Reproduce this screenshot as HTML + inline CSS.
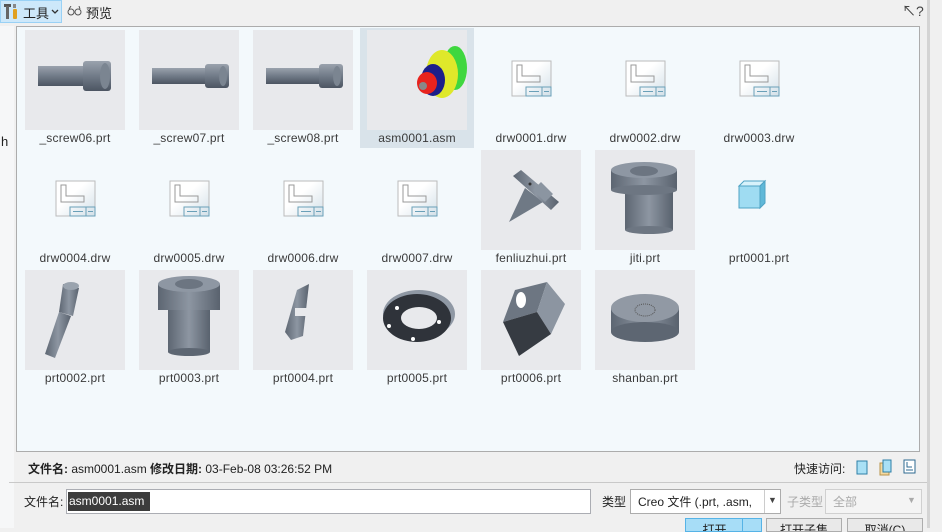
<!DOCTYPE html>
<html><head><meta charset="utf-8">
<style>
*{margin:0;padding:0;box-sizing:border-box}
body{width:942px;height:528px;overflow:hidden;background:#f0f0f0;font-family:"Liberation Sans","Noto Sans CJK SC",sans-serif;font-size:12px;color:#333;position:relative}
.abs{position:absolute}
.panel{left:16px;top:26px;width:904px;height:426px;background:#f3f9fc;border:1px solid #acacac}
.cell{position:absolute;width:114px;height:120px}
.thumb{position:absolute;left:0;top:0;width:100px;height:100px;background:#e8e9ec}
.cell svg{position:absolute;left:0;top:0}
.lbl{position:absolute;left:-7px;width:114px;top:101px;text-align:center;font-size:12px;color:#3a3a3a;letter-spacing:0.2px}
.sel{background:#d9e3ea}
.btn{position:absolute;top:518px;height:14px;border:1px solid #adadad;background:#e9e9e9;overflow:hidden;font-size:12px;color:#222;text-align:center;line-height:14px;padding-top:4px}
</style></head><body>
<div class="abs" style="left:0;top:0;width:942px;height:26px;background:#f0f0f0"></div>
<div class="abs" style="left:0;top:0;width:62px;height:23px;background:#cde8fa;border:1px solid #99d1f5"></div>
<svg class="abs" style="left:3px;top:3px" width="16" height="17" viewBox="0 0 16 17">
<rect x="1" y="1" width="7" height="3" fill="#555"/><rect x="3" y="3" width="3" height="13" fill="#666"/>
<rect x="10" y="1" width="3" height="4" fill="#888"/><rect x="10" y="6" width="4" height="10" rx="1" fill="#e0a020"/></svg>
<div class="abs" style="left:23px;top:3px;font-size:13px;color:#222">工具</div>
<svg class="abs" style="left:51px;top:9px" width="8" height="6"><path d="M1 1L4 4L7 1" stroke="#333" fill="none" stroke-width="1.3"/></svg>
<svg class="abs" style="left:67px;top:6px" width="16" height="11"><circle cx="4" cy="6" r="3" fill="none" stroke="#555"/><circle cx="11" cy="6" r="3" fill="none" stroke="#555"/><path d="M2 3L4 0M13 3L12 0" stroke="#555"/></svg>
<div class="abs" style="left:86px;top:3px;font-size:13px;color:#222">预览</div>
<div class="abs" style="left:902px;top:1px;font-size:14px;color:#444">&#8598;?</div>
<div class="abs" style="left:0;top:26px;width:14px;height:502px;background:#f6f7f8"></div>
<div class="abs" style="left:1px;top:134px;font-size:13px;color:#222">h</div>
<div class="abs" style="left:927px;top:0;width:3px;height:528px;background:#d4d4d4"></div>
<div class="abs" style="left:930px;top:0;width:12px;height:528px;background:#f0f0f0"></div>

<div class="abs panel"></div>
<div class="abs sel" style="left:360px;top:28px;width:114px;height:120px"></div>

<div class="cell" style="left:25px;top:30px"><div class="thumb"></div>
<svg width="100" height="100"><defs><linearGradient id="g1" x1="0" y1="0" x2="0" y2="1"><stop offset="0" stop-color="#9aa2ad"/><stop offset=".5" stop-color="#717b88"/><stop offset="1" stop-color="#4c5562"/></linearGradient></defs>
<rect x="13" y="36" width="48" height="20" fill="url(#g1)"/><rect x="58" y="31" width="28" height="30" rx="3" fill="url(#g1)"/><ellipse cx="80" cy="46" rx="5" ry="13" fill="#7b8591"/></svg>
<div class="lbl">_screw06.prt</div></div>
<div class="cell" style="left:139px;top:30px"><div class="thumb"></div>
<svg width="100" height="100"><rect x="13" y="38" width="66" height="16" fill="url(#g1)"/><rect x="66" y="34" width="24" height="24" rx="3" fill="url(#g1)"/><ellipse cx="84" cy="46" rx="4" ry="10" fill="#7b8591"/></svg>
<div class="lbl">_screw07.prt</div></div>
<div class="cell" style="left:253px;top:30px"><div class="thumb"></div>
<svg width="100" height="100"><rect x="13" y="38" width="66" height="16" fill="url(#g1)"/><rect x="66" y="34" width="24" height="24" rx="3" fill="url(#g1)"/><ellipse cx="84" cy="46" rx="4" ry="10" fill="#7b8591"/></svg>
<div class="lbl">_screw08.prt</div></div>
<div class="cell" style="left:367px;top:30px"><div class="thumb"></div>
<svg width="100" height="100"><ellipse cx="88" cy="38" rx="12" ry="22" fill="#3fd73f"/><ellipse cx="75" cy="44" rx="16" ry="24" fill="#dfe82a"/><ellipse cx="66" cy="50" rx="12" ry="16" fill="#1c1f8a"/><ellipse cx="60" cy="53" rx="10" ry="11" fill="#e8231e"/><circle cx="56" cy="56" r="4" fill="#888"/></svg>
<div class="lbl">asm0001.asm</div></div>
<div class="cell" style="left:481px;top:30px"><svg width="100" height="100"><use href="#drw"/></svg><div class="lbl">drw0001.drw</div></div>
<div class="cell" style="left:595px;top:30px"><svg width="100" height="100"><use href="#drw"/></svg><div class="lbl">drw0002.drw</div></div>
<div class="cell" style="left:709px;top:30px"><svg width="100" height="100"><use href="#drw"/></svg><div class="lbl">drw0003.drw</div></div>

<svg width="0" height="0" style="position:absolute"><defs>
<linearGradient id="dg" x1="0" y1="0" x2="1" y2="1"><stop offset=".4" stop-color="#fff"/><stop offset="1" stop-color="#d3e0e8"/></linearGradient>
<g id="drw"><rect x="31" y="31" width="39" height="35" fill="url(#dg)" stroke="#bbb"/><path d="M36 35V52H59V46H41V35Z" fill="none" stroke="#999"/><rect x="45" y="57" width="25" height="9" fill="none" stroke="#6aa0b8"/><path d="M61 57V66M48 61.5H58M63 61.5H68" stroke="#6aa0b8"/></g>
<linearGradient id="g2" x1="0" y1="0" x2="1" y2="0"><stop offset="0" stop-color="#5d6672"/><stop offset=".5" stop-color="#8d96a2"/><stop offset="1" stop-color="#59626e"/></linearGradient>
</defs></svg>

<div class="cell" style="left:25px;top:150px"><svg width="100" height="100"><use href="#drw"/></svg><div class="lbl">drw0004.drw</div></div>
<div class="cell" style="left:139px;top:150px"><svg width="100" height="100"><use href="#drw"/></svg><div class="lbl">drw0005.drw</div></div>
<div class="cell" style="left:253px;top:150px"><svg width="100" height="100"><use href="#drw"/></svg><div class="lbl">drw0006.drw</div></div>
<div class="cell" style="left:367px;top:150px"><svg width="100" height="100"><use href="#drw"/></svg><div class="lbl">drw0007.drw</div></div>
<div class="cell" style="left:481px;top:150px"><div class="thumb"></div>
<svg width="100" height="100"><path d="M28 72L44 38L62 52Z" fill="#6f7985"/><path d="M32 26L40 20L78 52L70 60Z" fill="url(#g2)"/><path d="M52 40L60 32L72 44L64 52Z" fill="#8b95a1"/><circle cx="49" cy="34" r="1.5" fill="#333"/></svg>
<div class="lbl">fenliuzhui.prt</div></div>
<div class="cell" style="left:595px;top:150px"><div class="thumb"></div>
<svg width="100" height="100"><rect x="30" y="40" width="48" height="40" fill="url(#g2)"/><ellipse cx="54" cy="80" rx="24" ry="4" fill="#6d7682"/><rect x="16" y="20" width="66" height="20" fill="url(#g2)"/><ellipse cx="49" cy="40" rx="33" ry="5" fill="#6d7682"/><ellipse cx="49" cy="20" rx="33" ry="8" fill="#8e97a3"/><ellipse cx="49" cy="21" rx="14" ry="5" fill="#6c7581"/></svg>
<div class="lbl">jiti.prt</div></div>
<div class="cell" style="left:709px;top:150px">
<svg width="100" height="100"><path d="M30 36L35 31H56L51 36Z" fill="#d7f2fb" stroke="#4fa3c4"/><rect x="30" y="36" width="21" height="22" fill="#9fdcf2" stroke="#4fa3c4"/><path d="M51 36L56 31V53L51 58Z" fill="#5fb8d8" stroke="#4fa3c4"/></svg>
<div class="lbl">prt0001.prt</div></div>

<div class="cell" style="left:25px;top:270px"><div class="thumb"></div>
<svg width="100" height="100"><path d="M20 84L34 42L46 46L30 88Z" fill="url(#g2)"/><path d="M38 14L54 18L48 46L34 42Z" fill="url(#g2)"/><ellipse cx="46" cy="16" rx="8" ry="4" fill="#9aa3ae"/></svg>
<div class="lbl">prt0002.prt</div></div>
<div class="cell" style="left:139px;top:270px"><div class="thumb"></div>
<svg width="100" height="100"><rect x="29" y="40" width="42" height="42" fill="url(#g2)"/><rect x="19" y="14" width="62" height="26" fill="url(#g2)"/><ellipse cx="50" cy="14" rx="31" ry="8" fill="#8e97a3"/><ellipse cx="50" cy="14" rx="14" ry="5" fill="#6c7581"/><ellipse cx="50" cy="82" rx="21" ry="4" fill="#5d6672"/></svg>
<div class="lbl">prt0003.prt</div></div>
<div class="cell" style="left:253px;top:270px"><div class="thumb"></div>
<svg width="100" height="100"><path d="M44 20L56 14L50 66L38 70L32 62Z" fill="url(#g2)"/><rect x="42" y="38" width="12" height="8" fill="#e8e9ec"/></svg>
<div class="lbl">prt0004.prt</div></div>
<div class="cell" style="left:367px;top:270px"><div class="thumb"></div>
<svg width="100" height="100"><ellipse cx="52" cy="44" rx="36" ry="24" fill="#8f98a4"/><ellipse cx="50" cy="48" rx="34" ry="24" fill="#2f333a"/><ellipse cx="52" cy="48" rx="18" ry="11" fill="#e8e9ec"/><circle cx="30" cy="38" r="2" fill="#fff"/><circle cx="72" cy="52" r="2" fill="#fff"/><circle cx="22" cy="56" r="2" fill="#fff"/><circle cx="46" cy="69" r="2" fill="#fff"/></svg>
<div class="lbl">prt0005.prt</div></div>
<div class="cell" style="left:481px;top:270px"><div class="thumb"></div>
<svg width="100" height="100"><path d="M22 52L34 20L66 12L56 42Z" fill="#6d7682"/><path d="M66 12L84 34L70 64L56 42Z" fill="#8c95a1"/><path d="M22 52L56 42L70 64L38 86Z" fill="#363b42"/><ellipse cx="40" cy="30" rx="5" ry="8" fill="#fff"/></svg>
<div class="lbl">prt0006.prt</div></div>
<div class="cell" style="left:595px;top:270px"><div class="thumb"></div>
<svg width="100" height="100"><rect x="16" y="38" width="68" height="24" fill="url(#g2)"/><ellipse cx="50" cy="62" rx="34" ry="10" fill="#5d6672"/><ellipse cx="50" cy="38" rx="34" ry="14" fill="#9199a4"/><ellipse cx="50" cy="40" rx="10" ry="6" fill="none" stroke="#555" stroke-dasharray="1 1"/></svg>
<div class="lbl">shanban.prt</div></div>

<div class="abs" style="left:28px;top:460px;font-size:12px;color:#222"><b>文件名:</b> asm0001.asm <b>修改日期:</b> 03-Feb-08 03:26:52 PM</div>
<div class="abs" style="left:794px;top:460px;font-size:12px;color:#222">快速访问:</div>
<svg class="abs" style="left:856px;top:459px" width="60" height="17">
<rect x="1" y="2" width="10" height="13" fill="#a9e0f5" stroke="#2e7fa8"/>
<rect x="24" y="4" width="9" height="12" fill="#f4d9a0" stroke="#b8944a"/><rect x="27" y="1" width="8" height="12" fill="#a9e0f5" stroke="#2e7fa8"/>
<rect x="48" y="1" width="11" height="13" fill="#fff" stroke="#2e6a90"/><path d="M51 3V8H56" fill="none" stroke="#2e6a90"/><path d="M50 11H57" stroke="#2e6a90"/></svg>
<div class="abs" style="left:9px;top:482px;width:918px;height:1px;background:#c9c9c9"></div>

<div class="abs" style="left:24px;top:493px;font-size:12px;color:#222">文件名:</div>
<div class="abs" style="left:66px;top:489px;width:525px;height:25px;background:#fff;border:1px solid #abadb3"></div>
<div class="abs" style="left:68px;top:492px;height:19px;background:#3c3c3c;color:#fff;font-size:12px;padding:2px 1px 0 1px;width:82px">asm0001.asm</div>
<div class="abs" style="left:602px;top:493px;font-size:12px;color:#222">类型</div>
<div class="abs" style="left:630px;top:489px;width:151px;height:25px;background:#fff;border:1px solid #acacac"></div>
<div class="abs" style="left:638px;top:493px;font-size:12px;color:#222;white-space:nowrap">Creo 文件 (.prt, .asm,</div>
<div class="abs" style="left:764px;top:490px;width:1px;height:23px;background:#ccc"></div>
<div class="abs" style="left:768px;top:495px;font-size:9px;color:#444">▼</div>
<div class="abs" style="left:787px;top:493px;font-size:12px;color:#aaa">子类型</div>
<div class="abs" style="left:825px;top:489px;width:97px;height:25px;background:#f4f4f4;border:1px solid #d0d0d0"></div>
<div class="abs" style="left:833px;top:493px;font-size:12px;color:#aaa">全部</div>
<div class="abs" style="left:907px;top:495px;font-size:9px;color:#aaa">▼</div>

<div class="btn" style="left:685px;width:58px;background:#a7ddf7;border-color:#56b3e6;border-right:none">打开</div>
<div class="btn" style="left:742px;width:20px;background:#a7ddf7;border-color:#56b3e6"></div>
<div class="btn" style="left:766px;width:76px">打开子集</div>
<div class="btn" style="left:847px;width:76px">取消(C)</div>
</body></html>
